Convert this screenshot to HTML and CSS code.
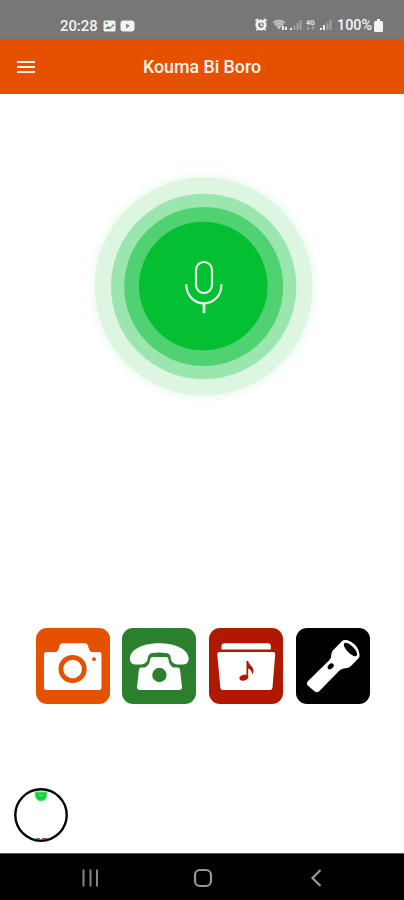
FILE: index.html
```html
<!DOCTYPE html>
<html lang="fr">

<head>
    <meta charset="UTF-8">
    <meta name="viewport" content="width=device-width, initial-scale=1.0">
    <title>Kouma Bi Boro</title>
    <link rel="stylesheet" href="styles.css">
</head>

<body>
    <div class="status-bar">
        <div class="status-left">
            <span class="clock">20:28</span>
            <svg width="13" height="12" viewBox="0 0 13 12">
                <rect x="0.5" y="0.5" width="12" height="11" rx="1.5" fill="#f4f4f4" />
                <path d="M2 9l3-3 2 1.500 4-4v2L7 9z" fill="#777" />
                <rect x="2" y="2" width="3" height="2" fill="#999" />
            </svg>
            <svg width="15" height="12" viewBox="0 0 15 12">
                <rect x="0.5" y="0.5" width="14" height="11" rx="3" fill="#f4f4f4" />
                <path d="M6 3.500v5l4-2.500z" fill="#8a8a8a" />
            </svg>
        </div>
        <div class="status-right">
            <svg width="77" height="14" viewBox="0 0 77 14">
                <!-- 目覚まし -->
                <g fill="none" stroke="#f4f4f4">
                    <circle cx="6" cy="7" r="4.200" stroke-width="2.800" />
                    <path d="M6 4.500V7.300H8M2.500 11l-1.300 1.500M9.500 11l1.300 1.500" stroke-width="1.200" />
                    <path d="M.5 3L3 1M11.500 3L9 1" stroke-width="1.800" />
                </g>
                <!-- Wi-Fi -->
                <path d="M17.500 4q6.500-5 13 0L24 11.500z" fill="#c4c4c4" />
                <path d="M19 5.700q5-3.700 10 0M21 8q3-2.300 6 0" fill="none" stroke="#858585" stroke-width=".7" />
                <path d="M27 8h2v4h-2zM30 9h2v3h-2z" fill="#ececec" />
                <path d="M35 10h2v2h-2z" fill="#eee" />
                <path d="M38.500 8h2v4h-2zM41.500 5h2v7h-2zM44.500 2h2v10h-2z" fill="#a4a4a4" />
                <text x="51" y="6.500" class="network">4G</text>
                <path d="M53 8v4M51.500 10.500L53 12l1.500-1.500M58 12V8m-1.500 1.500L58 8l1.500 1.500" fill="none" stroke="#aaa" />
                <path d="M65 10h2v2h-2zM68 7h2v5h-2z" fill="#eee" />
                <path d="M71.500 5h2v7h-2zM74.500 2h2v10h-2z" fill="#a4a4a4" />
            </svg>
            <span class="battery-level">100%</span>
            <svg width="9" height="13" viewBox="0 0 9 13">
                <path d="M3 0h3v2h1.500Q9 2 9 3.500v8Q9 13 7.500 13h-6Q0 13 0 11.500v-8Q0 2 1.500 2H3z" fill="#f4f4f4" />
            </svg>
        </div>
    </div>

    <header class="app-bar">
        <button class="menu-button" aria-label="Menu">
            <span></span>
            <span></span>
            <span></span>
        </button>
        <h1>Kouma Bi Boro</h1>
    </header>

    <main>
        <!-- マイクボタン -->
        <svg class="mic" width="240" height="240" viewBox="0 0 240 240">
            <defs>
                <radialGradient id="glow">
                    <stop offset="90%" stop-color="#04bf32" stop-opacity="0.08" />
                    <stop offset="100%" stop-color="#04bf32" stop-opacity="0" />
                </radialGradient>
            </defs>
            <circle cx="119.700" cy="121.500" r="117" fill="url(#glow)" />
            <circle cx="119.700" cy="121.500" r="109" fill="#dcf6e2" />
            <circle cx="119.700" cy="121.500" r="92.700" fill="#9be6ae" />
            <circle cx="119.700" cy="121.500" r="79.500" fill="#50d272" />
            <circle cx="119.300" cy="121" r="64.300" fill="#04bf32" />
            <g fill="none" stroke="#e9fbe9" stroke-width="2.200">
                <rect x="112" y="97" width="16" height="31" rx="8" />
                <path d="M102.300 119.300c0 11.500 8 19 17.700 19s17.500-7.500 17.500-19" />
                <path d="M120 138v10.200" stroke-width="2.800" />
            </g>
        </svg>

        <div class="shortcuts">
            <button class="tile camera" aria-label="Camera">
                <svg width="74" height="76" viewBox="0 0 74 76">
                    <path d="M10.500 24h9q2 0 2.700-2l1.600-5q.7-1.800 2.700-1.800h22.500q2 0 2.700 1.800l1.600 5q.7 2 2.700 2h7q2.500 0 2.500 2.500v33q0 2.500-2.500 2.500h-52.500Q8 62 8 59.500v-33Q8 24 10.500 24z" fill="#fff" />
                    <circle cx="36.600" cy="41" r="11.700" fill="#fff" stroke="#e65100" stroke-width="4.800" />
                    <circle cx="58" cy="31.200" r="1.900" fill="#e65100" />
                </svg>
            </button>
            <button class="tile phone" aria-label="Phone">
                <svg width="74" height="76" viewBox="0 0 74 76">
                    <path d="M8 29C10 20 23 15.300 37.300 15.300S64.500 20 66.500 29c.8 4-1.500 7.500-5 7.500h-5c-4.500 0-7.500-2.500-7.800-6.500-.2-3-1.500-4.500-4.500-5q-7-1-13.700 0c-3 .5-4.300 2-4.600 5-.4 4-3.200 6.500-7.700 6.500h-5C9.500 36.500 7.200 33 8 29z" fill="#fff" />
                    <path d="M30.500 29h13.700q1.800 0 2.200 2 .6 6 4.600 8.500h4.800q1.800 0 2.200 2L60 59q.2 3-3 3H18.300q-3.500 0-3.300-3L17 41.500q.4-2 2.200-2H23q4.500-2.500 5.300-8.500.4-2 2.200-2z" fill="#fff" />
                    <circle cx="37.400" cy="47" r="7.200" fill="#2b802d" />
                </svg>
            </button>
            <button class="tile music" aria-label="Music">
                <svg width="74" height="76" viewBox="0 0 74 76">
                    <path d="M12.500 21.500v-3q0-3.300 3.300-3.300h42.700q3.300 0 3.300 3.300v3z" fill="#fff" />
                    <path d="M10.500 24h53.500q2.300 0 2.200 2.300L63.500 59.500q-.2 2.500-2.700 2.500H14q-2.500 0-2.700-2.500L8.300 26.300Q8.200 24 10.500 24z" fill="#fff" />
                    <ellipse cx="34.700" cy="49.700" rx="4.400" ry="2.900" fill="#b01800" transform="rotate(-15 34.700 49.700)" />
                    <path d="M37.500 33h1.700c.5 4 5.500 5.500 5.300 10q0 2-1.500 3.500c.4-3-1.500-5-3.800-6V50h-1.700z" fill="#b01800" />
                </svg>
            </button>
            <button class="tile torch" aria-label="Torch">
                <svg width="74" height="76" viewBox="0 0 74 76">
                    <path d="M46 13Q49 10.800 54.500 13.500 62 17.500 63.500 26q.3 3-1 4.200L55 38q-2.500 2.500-6 2.300-3.500 0-5.800 2.500L23.200 63.300q-2.500 2-4.700 0L12 57.800q-2-2-.2-4.500L33 32.500q2.500-2.500 2.300-5.500 0-2.500 1.500-4.500z" fill="#fff" />
                    <ellipse cx="54.500" cy="21.500" rx="3.500" ry="8.800" fill="#000" transform="rotate(-45 54.500 21.500)" />
                    <ellipse cx="34.700" cy="38.300" rx="3.500" ry="2.400" fill="#000" transform="rotate(-42 34.700 38.300)" />
                </svg>
            </button>
        </div>

        <!-- 左下の丸いプレビュー -->
        <svg class="preview" width="56" height="56" viewBox="0 0 56 56">
            <circle cx="28" cy="28" r="25.700" fill="#fff" />
            <path d="M22 5h12q0 9-6 9t-6-9z" fill="#10d43c" stroke="#62df7d" />
            <path d="M26 7.500q2 3 4 0" fill="none" stroke="#7be890" />
            <circle cx="28" cy="28" r="25.700" fill="none" stroke="#050505" stroke-width="2.400" />
            <path d="M23 51.700h4" stroke="#4a8d50" stroke-width="1.500" />
            <path d="M29 51.700h5" stroke="#c03a45" stroke-width="1.500" />
        </svg>
    </main>

    <nav class="nav-bar">
        <svg width="18" height="20" viewBox="0 0 18 20">
            <path d="M2.500 1.500v17M9.500 1.500v17M16 1.500v17" stroke="#858585" stroke-width="2" />
        </svg>
        <svg class="home" width="20" height="20" viewBox="0 0 20 20">
            <rect x="2" y="2" width="16" height="16" rx="5" fill="none" stroke="#999" stroke-width="2.200" />
        </svg>
        <svg width="12" height="20" viewBox="0 0 12 20">
            <path d="M10.500 2l-8 8 8 8" fill="none" stroke="#999" stroke-width="2.200" />
        </svg>
    </nav>
</body>

</html>
```
FILE: styles.css
```css
body {
    margin: 0;
    height: 900px;
    display: flex;
    flex-direction: column;
    background-color: #fff;
    font-family: Roboto, "Liberation Sans", sans-serif;
    overflow: hidden;
}

svg {
    display: block;
    flex: none;
}

button {
    border: none;
    padding: 0;
    cursor: pointer;
}

/* ステータスバー */
.status-bar {
    height: 39px;
    box-sizing: border-box;
    padding: 12px 21px 0 60px;
    display: flex;
    justify-content: space-between;
    background-color: #777;
    color: #f4f4f4;
    font-size: 14.8px;
    font-weight: 500;
}

.status-left,
.status-right {
    height: 27px;
    display: flex;
    align-items: center;
}

.status-right {
    height: 26px;
}

.clock {
    width: 43px;
    padding-top: 1px;
}

.status-left svg + svg {
    margin-left: 4px;
}

.network {
    font-size: 7px;
    font-weight: 700;
    fill: #e4e4e4;
}

.battery-level {
    width: 36px;
    margin: 0 1px 0 5px;
    font-size: 14.4px;
}

/* ヘッダー */
.app-bar {
    height: 55px;
    display: flex;
    align-items: center;
    background-color: #e65100;
}

.menu-button {
    width: 18px;
    margin-left: 17px;
    display: flex;
    flex-direction: column;
    gap: 3px;
    background: none;
}

.menu-button span {
    height: 2px;
    background-color: #fff0e8;
}

h1 {
    flex: 1;
    margin: 0 35px 0 0;
    color: #fff5ee;
    font-size: 17.8px;
    font-weight: 500;
    text-align: center;
}

main {
    flex: 1;
    display: flex;
    flex-direction: column;
}

.mic {
    margin: 71px 0 0 84px;
}

.shortcuts {
    display: flex;
    gap: 12.8px;
    margin: 222.500px 0 0 35.700px;
}

.tile {
    width: 74px;
    height: 76.500px;
    border-radius: 11px;
    overflow: hidden;
}

.camera {
    background-color: #e65100;
}

.phone {
    background-color: #2b802d;
}

.music {
    background-color: #b01800;
}

.torch {
    background-color: #000;
}

.preview {
    margin: 83px 0 0 13px;
}

/* ナビゲーションバー */
.nav-bar {
    height: 47px;
    box-sizing: border-box;
    padding: 1px 82px 0 81px;
    border-top: 1px solid #555;
    display: flex;
    align-items: center;
    justify-content: space-between;
    background-color: #000;
}

.home {
    margin-right: 4px;
}
```
